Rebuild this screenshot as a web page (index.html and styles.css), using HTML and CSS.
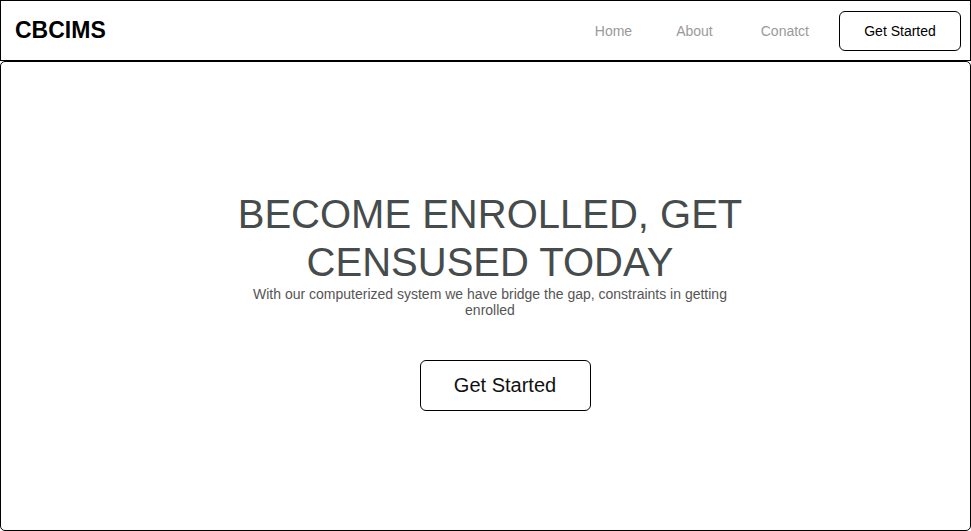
FILE: index.html
```html
<!DOCTYPE html>
<html lang="en">
<head>
<meta charset="utf-8">
<title>CBCIMS</title>
<link rel="stylesheet" href="styles.css">
</head>
<body>
<header class="topbar">
  <div class="logo">CBCIMS</div>
  <nav class="nav">
    <a class="nav-link" href="#">Home</a>
    <a class="nav-link" href="#">About</a>
    <a class="nav-link nav-link-contact" href="#">Conatct</a>
    <a class="btn btn-small" href="#">Get Started</a>
  </nav>
</header>
<main class="hero">
  <div class="hero-inner">
    <h1 class="hero-title">BECOME ENROLLED, GET CENSUSED TODAY</h1>
    <p class="hero-text">With our computerized system we have bridge the gap, constraints in getting enrolled</p>
    <a class="btn btn-large" href="#">Get Started</a>
  </div>
</main>
</body>
</html>
```

FILE: styles.css
```css
* { box-sizing: border-box; }
html, body { margin: 0; padding: 0; }
body {
  width: 971px;
  height: 531px;
  font-family: "Liberation Sans", Arial, sans-serif;
  background: #fff;
  color: #000;
  overflow: hidden;
}
.topbar {
  height: 61px;
  border: 1px solid #000;
  display: flex;
  align-items: center;
  justify-content: space-between;
  padding: 0 9px 0 14px;
}
.logo {
  font-weight: bold;
  font-size: 23px;
  letter-spacing: 0;
}
.nav {
  display: flex;
  align-items: center;
}
.nav-link {
  color: #9a9a9a;
  font-size: 14px;
  text-decoration: none;
  margin-right: 44px;
}
.nav-link:first-child { margin-left: 1px; }
.nav-link-contact { margin-left: 4px; margin-right: 30px; }
.btn {
  display: inline-flex;
  align-items: center;
  justify-content: center;
  color: #000;
  text-decoration: none;
  border: 1px solid #000;
  border-radius: 6px;
  background: #fff;
}
.btn-small {
  width: 122px;
  height: 40px;
  font-size: 14px;
}
.hero {
  height: 470px;
  border: 1px solid #000;
  border-radius: 5px;
  display: flex;
  align-items: center;
  justify-content: center;
  padding-left: 9px;
  padding-top: 8px;
}
.hero-inner {
  width: 510px;
  display: flex;
  flex-direction: column;
  align-items: center;
  text-align: center;
}
.hero-title {
  margin: 0;
  font-size: 40px;
  font-weight: normal;
  line-height: 48px;
  color: #464c4c;
}
.hero-text {
  margin: 0;
  font-size: 14px;
  line-height: 16px;
  color: #555;
}
.btn-large {
  margin-top: 42px;
  margin-left: 30px;
  width: 171px;
  height: 51px;
  font-size: 20px;
  color: #111;
}
```
